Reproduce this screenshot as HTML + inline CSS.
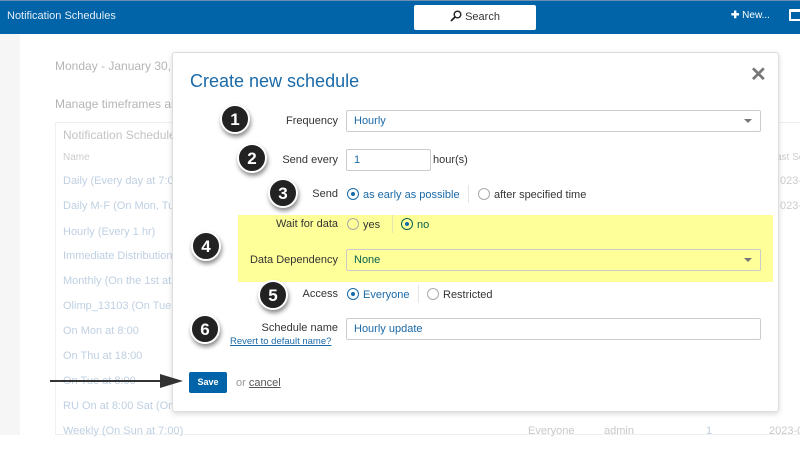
<!DOCTYPE html>
<html><head><style>
*{margin:0;padding:0;box-sizing:border-box}
body{width:800px;height:472px;overflow:hidden;background:#fff;font-family:"Liberation Sans",sans-serif;position:relative;font-size:11px}
.a{position:absolute;white-space:nowrap}
.top{left:0;top:0;width:800px;height:34px;background:#0264a8;border-top:1px solid #6a8fb0}
.side{left:0;top:34px;width:20px;height:401px;background:#f6f6f6}
.g{color:#b5b5b5}
.lk{color:#bfd0e2}
.modal{left:172px;top:52px;width:607px;height:360px;background:#fff;border:1px solid #ddd;border-radius:3px;box-shadow:0 2px 6px rgba(0,0,0,.15)}
.lbl{color:#333;font-size:11px;text-align:right;width:120px}
.inp{border:1px solid #ccc;border-radius:2px;height:22px;color:#1a6aa8;padding:4px 7px;font-size:11px;background:#fff}
.num{width:30px;height:30px;border-radius:50%;background:#222;color:#fff;font-weight:bold;font-size:17px;text-align:center;line-height:27px;border:2px solid #fff;box-shadow:1px 3px 4px rgba(0,0,0,.45)}
.rad{width:12px;height:12px;border-radius:50%;border:1px solid #aaa;display:inline-block;vertical-align:-2px;margin-right:4px}
.rad.on{border-color:#1a6aa8}
.rad.on:after{content:"";display:block;width:4px;height:4px;border-radius:50%;background:#1a6aa8;margin:3px}
.blue{color:#1a6aa8}
.car{position:absolute;right:8px;top:8px;border:4px solid transparent;border-top:4px solid #777;border-bottom:0}
</style></head><body>
<div class="a top"></div>
<div class="a" style="left:7px;top:10px;color:#e6eef6;font-size:11px">Notification Schedules</div>
<div class="a" style="left:414px;top:5px;width:122px;height:25px;background:#fff;border-radius:2px;text-align:center;line-height:25px;font-size:11px;color:#333">
<svg width="12" height="12" viewBox="0 0 12 12" style="vertical-align:-2px"><circle cx="7.5" cy="4.5" r="3.3" fill="none" stroke="#222" stroke-width="1.4"/><path d="M5 7 L1 11" stroke="#222" stroke-width="1.8"/></svg> Search</div>
<div class="a" style="left:731px;top:10px;color:#fff;font-size:10px;font-weight:bold">✚ <span style="font-weight:normal">New...</span></div>
<div class="a" style="left:789px;top:9px;width:14px;height:12px;border:2px solid #fff;border-top-width:3px;border-radius:1px"></div>
<div class="a side"></div>
<div class="a g" style="left:55px;top:59px;font-size:12px">Monday - January 30,</div>
<div class="a g" style="left:55px;top:97px;font-size:12px">Manage timeframes ar</div>
<div class="a" style="left:55px;top:122px;width:745px;height:313px;border:1px solid #f0f0f0;border-right:0"></div>
<div class="a g" style="left:63px;top:128px;font-size:12px;color:#c4c4c4">Notification Schedule</div>
<div class="a g" style="left:63px;top:152px;font-size:10px;color:#ccc">Name</div>
<div class="a lk" style="left:63px;top:175px">Daily (Every day at 7:00</div>
<div class="a lk" style="left:63px;top:200px">Daily M-F (On Mon, Tue</div>
<div class="a lk" style="left:63px;top:226px">Hourly (Every 1 hr)</div>
<div class="a lk" style="left:63px;top:250px">Immediate Distribution S</div>
<div class="a lk" style="left:63px;top:275px">Monthly (On the 1st at 7</div>
<div class="a lk" style="left:63px;top:300px">Olimp_13103 (On Tue &amp;</div>
<div class="a lk" style="left:63px;top:325px">On Mon at 8:00</div>
<div class="a lk" style="left:63px;top:350px">On Thu at 18:00</div>
<div class="a lk" style="left:63px;top:375px">On Tue at 8:00</div>
<div class="a lk" style="left:63px;top:400px">RU On at 8:00 Sat (On S</div>
<div class="a lk" style="left:63px;top:425px">Weekly (On Sun at 7:00)</div>
<div class="a g" style="left:528px;top:425px;color:#c8c8c8">Everyone</div>
<div class="a g" style="left:604px;top:425px;color:#c8c8c8">admin</div>
<div class="a lk" style="left:706px;top:425px">1</div>
<div class="a g" style="left:769px;top:425px;color:#c8c8c8">2023-0</div>
<div class="a g" style="left:776px;top:152px;color:#ccc;font-size:10px">ast Se</div>
<div class="a g" style="left:780px;top:175px;color:#ccc">023-0</div>
<div class="a g" style="left:780px;top:200px;color:#ccc">023-0</div>

<div class="a modal"></div>
<div class="a" style="left:190px;top:71px;font-size:18px;color:#1a6aa8">Create new schedule</div>
<div class="a" style="left:750px;top:62px;font-size:20px;color:#777;font-weight:bold">✕</div>
<div class="a" style="left:238px;top:215px;width:535px;height:67px;background:#ffff99"></div>

<div class="a lbl" style="left:218px;top:115px">Frequency</div>
<div class="a inp" style="left:346px;top:110px;width:415px">Hourly<span class="car"></span></div>
<div class="a lbl" style="left:218px;top:154px">Send every</div>
<div class="a inp" style="left:346px;top:149px;width:85px">1</div>
<div class="a" style="left:433px;top:154px;color:#333">hour(s)</div>
<div class="a lbl" style="left:218px;top:188px">Send</div>
<div class="a blue" style="left:347px;top:188px"><span class="rad on"></span>as early as possible</div>
<div class="a" style="left:468px;top:185px;width:1px;height:18px;background:#e5e5e5"></div>
<div class="a" style="left:478px;top:188px;color:#333"><span class="rad"></span>after specified time</div>
<div class="a lbl" style="left:218px;top:218px">Wait for data</div>
<div class="a" style="left:347px;top:218px;color:#333"><span class="rad"></span>yes</div>
<div class="a" style="left:392px;top:215px;width:1px;height:18px;background:#e5e5b0"></div>
<div class="a" style="left:401px;top:218px;color:#0a6050"><span class="rad on" style="border-color:#0a6050"></span>no</div>
<div class="a lbl" style="left:218px;top:254px">Data Dependency</div>
<div class="a inp" style="left:346px;top:249px;width:415px;background:#ffff99;border-color:#ccc;color:#0a6050">None<span class="car"></span></div>
<div class="a lbl" style="left:218px;top:288px">Access</div>
<div class="a blue" style="left:347px;top:288px"><span class="rad on"></span>Everyone</div>
<div class="a" style="left:418px;top:285px;width:1px;height:18px;background:#e5e5e5"></div>
<div class="a" style="left:427px;top:288px;color:#333"><span class="rad"></span>Restricted</div>
<div class="a lbl" style="left:218px;top:322px">Schedule name</div>
<div class="a" style="left:230px;top:336px;font-size:9.5px;color:#1a6aa8;text-decoration:underline">Revert to default name?</div>
<div class="a inp" style="left:346px;top:318px;width:415px">Hourly update</div>
<div class="a" style="left:189px;top:372px;width:38px;height:21px;background:#0264a8;border-radius:2px;color:#fff;font-weight:bold;font-size:9px;text-align:center;line-height:21px">Save</div>
<div class="a" style="left:236px;top:377px;color:#999">or <span style="color:#555;text-decoration:underline">cancel</span></div>
<div class="a" style="left:50px;top:380px;width:110px;height:2px;background:#333"></div>
<svg class="a" style="left:160px;top:373px" width="24" height="16"><path d="M0 1 L23 8 L0 15 Z" fill="#333"/></svg>

<div class="a num" style="left:220px;top:104px">1</div>
<div class="a num" style="left:237px;top:143px">2</div>
<div class="a num" style="left:268px;top:178px">3</div>
<div class="a num" style="left:191px;top:231px">4</div>
<div class="a num" style="left:258px;top:280px">5</div>
<div class="a num" style="left:190px;top:314px">6</div>
</body></html>
